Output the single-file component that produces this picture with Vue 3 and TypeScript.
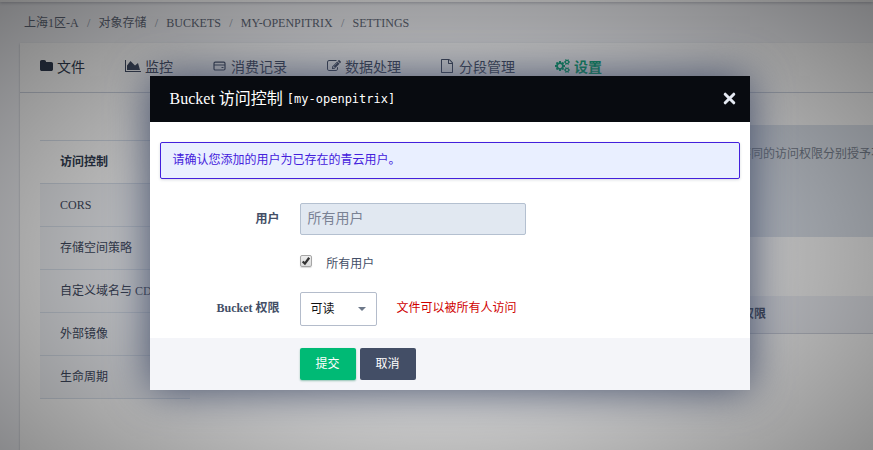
<script setup lang="ts">
import { ref } from 'vue'

interface Tab {
  key: string
  label: string
  box?: string
  path?: string
  width: number
}

const crumbs = ['上海1区-A', '对象存储', 'BUCKETS', 'MY-OPENPITRIX', 'SETTINGS']

const tabs: Tab[] = [
  {
    key: 'files',
    label: '文件',
    width: 13,
    box: '64 0 1664 1792',
    path: 'M1728 608v704q0 92-66 158t-158 66h-1216q-92 0-158-66t-66-158v-960q0-92 66-158t158-66h320q92 0 158 66t66 158v32h672q92 0 158 66t66 158z',
  },
  {
    key: 'monitor',
    label: '监控',
    width: 16,
    box: '0 0 2048 1792',
    path: 'M2048 1536v128h-2048v-1536h128v1408h1920zm-384-1024l256 896h-1664v-576l448-576 576 576z',
  },
  { key: 'billing', label: '消费记录', width: 14 },
  {
    key: 'process',
    label: '数据处理',
    width: 14,
    box: '0 0 1792 1792',
    path: 'M888 1184l116-116-152-152-116 116v56h96v96h56zm440-720q-16-16-33 1l-350 350q-17 17-1 33t33-1l350-350q17-17 1-33zm80 594v190q0 119-84.5 203.5t-203.5 84.5h-832q-119 0-203.5-84.5t-84.5-203.5v-832q0-119 84.5-203.5t203.5-84.5h832q63 0 117 25 15 7 18 23 3 17-9 29l-49 49q-14 14-32 8-23-6-45-6h-832q-66 0-113 47t-47 113v832q0 66 47 113t113 47h832q66 0 113-47t47-113v-126q0-13 9-22l64-64q15-15 35-7t20 29zm-96-738l288 288-672 672h-288v-288zm444 132l-92 92-288-288 92-92q28-28 68-28t68 28l152 152q28 28 28 68t-28 68z',
  },
  {
    key: 'segments',
    label: '分段管理',
    width: 14,
    box: '128 0 1792 1792',
    path: 'M1596 380q28 28 48 76t20 88v1152q0 40-28 68t-68 28h-1344q-40 0-68-28t-28-68v-1600q0-40 28-68t68-28h896q40 0 88 20t76 48zm-444-244v376h376q-10-29-22-41l-313-313q-12-12-41-22zm384 1528v-1024h-416q-40 0-68-28t-28-68v-416h-768v1536h1280z',
  },
  {
    key: 'settings',
    label: '设置',
    width: 15,
    box: '0 0 1920 1792',
    path: 'M896 896q0-106-75-181t-181-75-181 75-75 181 75 181 181 75 181-75 75-181zm768 512q0-52-38-90t-90-38-90 38-38 90q0 53 37.5 90.5t90.5 37.5 90.5-37.5 37.5-90.5zm0-1024q0-52-38-90t-90-38-90 38-38 90q0 53 37.5 90.5t90.5 37.5 90.5-37.5 37.5-90.5zm-384 421v185q0 10-7 19.5t-16 10.5l-155 24q-11 35-32 76 34 48 90 115 7 11 7 20 0 12-7 19-23 30-82.5 89.5t-78.5 59.5q-11 0-21-7l-115-90q-37 19-77 31-11 108-23 155-7 24-30 24h-186q-11 0-20-7.5t-10-17.5l-23-153q-34-10-75-31l-118 89q-7 7-20 7-11 0-21-8-144-133-144-160 0-9 7-19 10-14 41-53t47-61q-23-44-35-82l-152-24q-10-1-17-9.5t-7-19.5v-185q0-10 7-19.5t16-10.5l155-24q11-35 32-76-34-48-90-115-7-11-7-20 0-12 7-20 22-30 82-89t79-59q11 0 21 7l115 90q34-18 77-32 11-108 23-154 7-24 30-24h186q11 0 20 7.5t10 17.5l23 153q34 10 75 31l118-89q8-7 20-7 11 0 21 8 144 133 144 160 0 8-7 19-12 16-42 54t-45 60q23 48 34 82l152 23q10 2 17 10.5t7 19.5zm640 533v140q0 16-149 31-12 27-30 52 51 113 51 138 0 4-4 7-122 71-124 71-8 0-46-47t-52-68q-20 2-30 2t-30-2q-14 21-52 68t-46 47q-2 0-124-71-4-3-4-7 0-25 51-138-18-25-30-52-149-15-149-31v-140q0-16 149-31 13-29 30-52-51-113-51-138 0-4 4-7 4-2 35-20t59-34 30-16q8 0 46 46.5t52 67.5q20-2 30-2t30 2q51-71 92-112l6-2q4 0 124 70 4 3 4 7 0 25-51 138 17 23 30 52 149 15 149 31zm0-1024v140q0 16-149 31-12 27-30 52 51 113 51 138 0 4-4 7-122 71-124 71-8 0-46-47t-52-68q-20 2-30 2t-30-2q-14 21-52 68t-46 47q-2 0-124-71-4-3-4-7 0-25 51-138-18-25-30-52-149-15-149-31v-140q0-16 149-31 13-29 30-52-51-113-51-138 0-4 4-7 4-2 35-20t59-34 30-16q8 0 46 46.5t52 67.5q20-2 30-2t30 2q51-71 92-112l6-2q4 0 124 70 4 3 4 7 0 25-51 138 17 23 30 52 149 15 149 31z',
  },
]

const sections = ['访问控制', 'CORS', '存储空间策略', '自定义域名与 CDN', '外部镜像', '生命周期']
const allUsers = ref(true)
</script>

<template>
  <div class="screen">
    <div class="topbar"></div>
    <nav class="crumbs">
      <template v-for="(c, i) in crumbs" :key="c">
        <span v-if="i" class="slash">/</span>
        <span>{{ c }}</span>
      </template>
    </nav>

    <main class="card">
      <div class="tabs">
        <a v-for="t in tabs" :key="t.key" class="tab" :class="t.key">
          <svg v-if="t.path" class="icon" :viewBox="t.box" :style="{ width: t.width + 'px' }">
            <path :d="t.path" fill="currentColor" />
          </svg>
          <svg v-else class="icon" viewBox="0 0 14 14">
            <rect x="1" y="3.2" width="11" height="7.8" rx="1.2" fill="none" stroke="currentColor" stroke-width="1.2" />
            <path d="M1 6h11M8.5 8.5h2" fill="none" stroke="currentColor" stroke-width="1.2" />
          </svg>
          <span>{{ t.label }}</span>
        </a>
      </div>
      <div class="content">
        <ul class="side">
          <li v-for="(s, i) in sections" :key="s" :class="{ active: i === 0 }">{{ s }}</li>
        </ul>
        <section class="detail">
          <div class="info">不同的访问权限分别授予不</div>
          <div class="thead">权限</div>
        </section>
      </div>
    </main>

    <div class="backdrop"></div>

    <div class="modal">
      <header class="modal-head">
        <h3>Bucket 访问控制</h3>
        <code>[my-openpitrix]</code>
        <svg class="close" viewBox="0 0 13 13">
          <path d="M2.2 2.2l8.6 8.6M10.8 2.2l-8.6 8.6" fill="none" stroke="currentColor" stroke-width="3" stroke-linecap="round" />
        </svg>
      </header>
      <div class="modal-body">
        <div class="notice">请确认您添加的用户为已存在的青云用户。</div>
        <div class="row user-row">
          <label>用户</label>
          <div class="input">所有用户</div>
        </div>
        <div class="row check-row" @click="allUsers = !allUsers">
          <label></label>
          <span class="box">
            <svg v-if="allUsers" viewBox="0 0 12 12">
              <path d="M2.7 6.5l2.2 2.1 4.3-5.8" fill="none" stroke="#333" stroke-width="2.3" />
            </svg>
          </span>
          <span class="check-label">所有用户</span>
        </div>
        <div class="row perm-row">
          <label>Bucket 权限</label>
          <div class="select"><span>可读</span><i class="caret"></i></div>
          <span class="warn">文件可以被所有人访问</span>
        </div>
      </div>
      <footer class="modal-foot">
        <button class="btn submit">提交</button>
        <button class="btn">取消</button>
      </footer>
    </div>
  </div>
</template>

<style>
body {
  overflow: hidden;
}
</style>

<style scoped>
* {
  box-sizing: border-box;
}
.screen {
  position: relative;
  width: 873px;
  height: 450px;
  overflow: hidden;
  display: flex;
  flex-direction: column;
  background: #f4f5f9;
  color: #3f495f;
  font: 12px/18px 'Liberation Serif', 'Noto Sans CJK SC', serif;
}
.topbar {
  height: 2px;
  flex: none;
  background: #fff;
  box-shadow: 0 1px 3px rgba(50, 55, 75, 0.35);
}
.crumbs {
  display: flex;
  flex: none;
  height: 41px;
  padding: 12px 24px 0;
  color: #626a7a;
}
.slash {
  width: 19.8px;
  text-align: center;
  color: #8c96a8;
}
.card {
  flex: 1;
  margin-left: 20px;
  background: #fff;
  box-shadow: 0 1px 2px rgba(67, 78, 102, 0.35);
}
.tabs {
  display: flex;
  gap: 40px;
  height: 50px;
  padding: 0 20px;
  border-bottom: 1px solid #cdd3df;
  font-size: 14px;
}
.tab {
  display: flex;
  flex: none;
  align-items: center;
  gap: 4px;
  padding-top: 1px;
}
.tab span {
  line-height: 20px;
}
.icon {
  flex: none;
  width: 14px;
  height: 14px;
  margin-top: -4px;
}
.files {
  color: #303b50;
}
.settings {
  color: #00aa72;
  font-weight: bold;
}
.content {
  display: flex;
  gap: 20px;
  padding-left: 20px;
}
.side {
  flex: none;
  width: 150px;
  margin: 47px 0 0;
  padding: 0;
  list-style: none;
  border-top: 1px solid #d9e1ec;
}
.side li {
  height: 43px;
  padding: 12px 0 0 20px;
  background: #f4f6fa;
  border-bottom: 1px solid #d9e1ec;
  white-space: nowrap;
}
.side li.active {
  background: #fff;
  color: #303b50;
  font-weight: bold;
}
.detail {
  flex: 1;
  min-width: 0;
  padding-top: 32px;
}
.info {
  height: 112px;
  padding: 20px 0 0 529px;
  background: #dfe5ee;
  color: #7c8594;
  white-space: nowrap;
  overflow: hidden;
}
.thead {
  height: 38px;
  margin-top: 59px;
  padding: 9px 0 0 532px;
  background: #f0f2f8;
  border-bottom: 1px solid #d0d4df;
  font-weight: bold;
}
.backdrop {
  position: absolute;
  top: 0;
  left: 0;
  width: 873px;
  height: 520px;
  background: radial-gradient(ellipse at center, rgba(0, 0, 0, 0), rgba(0, 0, 0, 0.5));
}
.modal {
  position: absolute;
  top: 76px;
  left: 150px;
  width: 600px;
  height: 314px;
  display: flex;
  flex-direction: column;
  background: #fff;
  box-shadow: 0 0 40px #434e6a;
  color: #434e66;
}
.modal-head {
  display: flex;
  align-items: center;
  height: 46px;
  padding: 0 14px 0 19.5px;
  background: #080b10;
  color: #fff;
}
.modal-head h3 {
  margin: 0;
  font-size: 16px;
  font-weight: normal;
  line-height: 24px;
}
.modal-head code {
  margin-left: 4px;
  font: 12px/18px 'DejaVu Sans Mono', monospace;
}
.close {
  width: 13px;
  height: 13px;
  margin: -1px 0 0 auto;
  color: #e4e9f2;
}
.modal-body {
  height: 216px;
  padding: 20px 10px 0;
}
.notice {
  height: 37px;
  padding: 8px 11.5px;
  border: 1px solid #4320dc;
  border-radius: 2px;
  background: #e9efff;
  box-shadow: 0 1px 3px rgba(67, 78, 102, 0.2);
  color: #4320dc;
}
.row {
  display: flex;
  align-items: center;
}
.row label {
  width: 119.5px;
  margin-right: 20.5px;
  text-align: right;
  font-weight: bold;
}
.user-row {
  margin-top: 24px;
}
.user-row label {
  margin-top: -1px;
}
.perm-row label {
  margin-top: -3px;
}
.input {
  width: 226px;
  height: 32px;
  padding: 0 6.5px;
  border: 1px solid #b4c0d0;
  border-radius: 2px;
  background: #e1e8f1;
  color: #7a8294;
  font-size: 14px;
  line-height: 30px;
}
.check-row {
  height: 18px;
  margin-top: 19px;
}
.box {
  width: 12px;
  height: 12px;
  margin-top: -4px;
  border: 1px solid #a6a6a6;
  border-radius: 2px;
  background: linear-gradient(#ededed, #dcdcdc);
  box-shadow: 0 1px 1px rgba(0, 0, 0, 0.15);
}
.box svg {
  display: block;
  width: 12px;
  height: 12px;
  margin: -1px;
}
.check-label {
  margin: 2px 0 0 14.3px;
}
.perm-row {
  margin-top: 20px;
}
.select {
  display: flex;
  align-items: center;
  justify-content: space-between;
  width: 77px;
  height: 34px;
  padding: 0 10px 0 9.5px;
  border: 1px solid #b4bccb;
  border-radius: 2px;
  color: #111;
}
.caret {
  border: 4px solid transparent;
  border-top-color: #6d7889;
  border-bottom: 0;
}
.warn {
  margin: -2px 0 0 19.5px;
  color: #cf0000;
}
.modal-foot {
  display: flex;
  gap: 4px;
  height: 52px;
  padding: 10px 0 0 150px;
  background: #f4f5f9;
}
.btn {
  width: 56px;
  height: 32px;
  padding: 0 1px 0 0;
  border: 0;
  border-radius: 2px;
  background: #434e66;
  color: #fff;
  font: inherit;
}
.submit {
  background: #00ba75;
  box-shadow: 0 1px 2px rgba(0, 120, 75, 0.4);
}
</style>
